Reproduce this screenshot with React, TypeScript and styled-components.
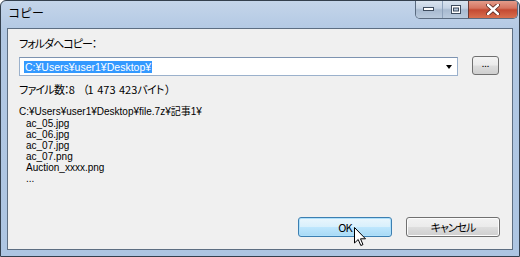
import styled, { createGlobalStyle } from 'styled-components'

const GlobalStyle = createGlobalStyle`
  html, body {
    margin: 0;
    padding: 0;
    background: #ffffff;
  }
  body {
    font-family: "Noto Sans CJK JP", "Liberation Sans", sans-serif;
  }
`

const Window = styled.div`
  position: relative;
  width: 520px;
  height: 257px;
  box-sizing: border-box;
  border: 1px solid #34404e;
  border-radius: 6px 6px 0 0;
  background: linear-gradient(180deg, #c4d5ea 0%, #b2c8e3 12%, #adc5e2 100%);
  display: flex;
  flex-direction: column;
  overflow: hidden;
`

const TitleBar = styled.div`
  height: 26px;
  display: flex;
  align-items: flex-start;
  padding-left: 7px;
`

const Title = styled.div`
  font-size: 12px;
  line-height: 14px;
  margin-top: 5px;
  color: #000;
`

const Controls = styled.div`
  margin-left: auto;
  margin-right: 1px;
  display: flex;
  margin-top: -1px;
  height: 18px;
  border: 1px solid #5a6b80;
  border-top: none;
  border-radius: 0 0 5px 5px;
  overflow: hidden;
`

const CtrlButton = styled.div<{ $close?: boolean; $w: number }>`
  width: ${(p) => p.$w}px;
  height: 18px;
  box-sizing: border-box;
  display: flex;
  align-items: center;
  justify-content: center;
  border-left: ${(p) => (p.$close ? '1px solid #6b3a36' : '1px solid #8ea2bb')};
  background: ${(p) =>
    p.$close
      ? 'linear-gradient(180deg, #e5a190 0%, #d67560 45%, #c44a32 55%, #d8704f 100%)'
      : 'linear-gradient(180deg, #dce6f1 0%, #c5d3e4 45%, #a8bad0 55%, #b9cadd 100%)'};
  &:first-child {
    border-left: none;
  }
`

const Client = styled.div`
  flex: 1;
  margin: 1px 6px 6px 6px;
  border: 1px solid #5d6e82;
  background: #f0f0f0;
  display: flex;
  flex-direction: column;
  padding: 8px 12px 12px 11px;
  font-size: 11px;
  line-height: 13px;
  color: #000;
  font-feature-settings: "palt";
`

const Label = styled.div`
  height: 14px;
  letter-spacing: -1px;
`

const ComboRow = styled.div`
  display: flex;
  align-items: flex-start;
  gap: 14px;
  margin-top: 5px;
`

const Combo = styled.div`
  width: 439px;
  height: 19px;
  box-sizing: border-box;
  border: 1px solid #9bb1cc;
  border-top-color: #7d93b0;
  background: #fff;
  display: flex;
  align-items: center;
  padding-left: 4px;
  margin-top: 1px;
`

const Selected = styled.span`
  background: #3399ff;
  color: #fff;
  line-height: 12px;
  height: 12px;
  padding: 0 1px;
  font-family: "Liberation Sans", "Noto Sans CJK JP", sans-serif;
  font-size: 10.5px;
`

const Arrow = styled.div`
  margin-left: auto;
  margin-right: 5px;
  width: 0;
  height: 0;
  border-left: 3px solid transparent;
  border-right: 3px solid transparent;
  border-top: 4px solid #000;
`

const SmallButton = styled.div`
  width: 27px;
  height: 19px;
  box-sizing: border-box;
  border: 1px solid #707070;
  border-radius: 3px;
  background: linear-gradient(180deg, #f3f3f3 0%, #ebebeb 48%, #dddddd 52%, #cfcfcf 100%);
  display: flex;
  align-items: center;
  justify-content: center;
  font-size: 9px;
  line-height: 10px;
  padding-bottom: 3px;
`

const Info = styled.div`
  margin-top: 7px;
  white-space: pre;
  letter-spacing: -0.8px;
`

const Num = styled.span`
  letter-spacing: 0;
  word-spacing: 1px;
`

const Bytes = styled.span`
  margin-left: 8px;
`

const Path = styled.div`
  margin-top: 9px;
  font-family: "Liberation Sans", "Noto Sans CJK JP", sans-serif;
  font-size: 10px;
`

const FileList = styled.div`
  padding-left: 7px;
  font-family: "Liberation Sans", "Noto Sans CJK JP", sans-serif;
  font-size: 10px;
  line-height: 11px;
`

const Footer = styled.div`
  margin-top: auto;
  display: flex;
  justify-content: flex-end;
  gap: 14px;
  position: relative;
`

const DialogButton = styled.div<{ $default?: boolean }>`
  width: 94px;
  height: 20px;
  box-sizing: border-box;
  border: 1px solid ${(p) => (p.$default ? '#3c7fb1' : '#707070')};
  border-radius: 3px;
  background: ${(p) =>
    p.$default
      ? 'linear-gradient(180deg, #eaf6fd 0%, #d9f0fc 48%, #bee6fd 52%, #a7d9f5 100%)'
      : 'linear-gradient(180deg, #f2f2f2 0%, #ebebeb 48%, #dddddd 52%, #cfcfcf 100%)'};
  box-shadow: ${(p) => (p.$default ? 'inset 0 0 0 1px #aee0fb' : 'inset 0 0 0 1px #fcfcfc')};
  display: flex;
  align-items: center;
  justify-content: center;
  font-size: 11px;
  letter-spacing: -1px;
`

const Cursor = styled.svg`
  position: absolute;
  left: 335px;
  top: 10px;
`

const files = ['ac_05.jpg', 'ac_06.jpg', 'ac_07.jpg', 'ac_07.png', 'Auction_xxxx.png', '...']

export default function App() {
  return (
    <>
      <GlobalStyle />
      <Window>
        <TitleBar>
          <Title>コピー</Title>
          <Controls>
            <CtrlButton $w={26}>
              <svg width="12" height="6" viewBox="0 0 12 6">
                <rect x="0.5" y="1.5" width="10" height="3" fill="#fff" stroke="#3e4c5e" />
              </svg>
            </CtrlButton>
            <CtrlButton $w={26}>
              <svg width="10" height="9" viewBox="0 0 10 9">
                <rect x="0.5" y="0.5" width="9" height="8" fill="#fff" stroke="#3e4c5e" />
                <rect x="2.5" y="3" width="5" height="3" fill="#b7c7da" stroke="#3e4c5e" />
              </svg>
            </CtrlButton>
            <CtrlButton $close $w={49}>
              <svg width="14" height="11" viewBox="0 0 14 11">
                <path
                  d="M2 1 L12 10 M12 1 L2 10"
                  stroke="#5c2a22"
                  strokeWidth="4.2"
                  strokeLinecap="round"
                />
                <path d="M2 1 L12 10 M12 1 L2 10" stroke="#fff" strokeWidth="2.4" strokeLinecap="round" />
              </svg>
            </CtrlButton>
          </Controls>
        </TitleBar>
        <Client>
          <Label>フォルダへコピー：</Label>
          <ComboRow>
            <Combo>
              <Selected>C:¥Users¥user1¥Desktop¥</Selected>
              <Arrow />
            </Combo>
            <SmallButton>...</SmallButton>
          </ComboRow>
          <Info>
            ファイル数：<Num>8</Num>
            <Bytes>
              （<Num>1 473 423</Num>バイト ）
            </Bytes>
          </Info>
          <Path>C:¥Users¥user1¥Desktop¥file.7z¥記事1¥</Path>
          <FileList>
            {files.map((f) => (
              <div key={f}>{f}</div>
            ))}
          </FileList>
          <Footer>
            <DialogButton $default>OK</DialogButton>
            <DialogButton>キャンセル</DialogButton>
            <Cursor width="13" height="20" viewBox="0 0 13 20">
              <path
                d="M0.5 0.5 L0.5 16 L4.2 12.5 L6.8 18.5 L9 17.6 L6.5 11.8 L11.5 11.8 Z"
                fill="#fff"
                stroke="#000"
                strokeWidth="1"
                strokeLinejoin="round"
              />
            </Cursor>
          </Footer>
        </Client>
      </Window>
    </>
  )
}
